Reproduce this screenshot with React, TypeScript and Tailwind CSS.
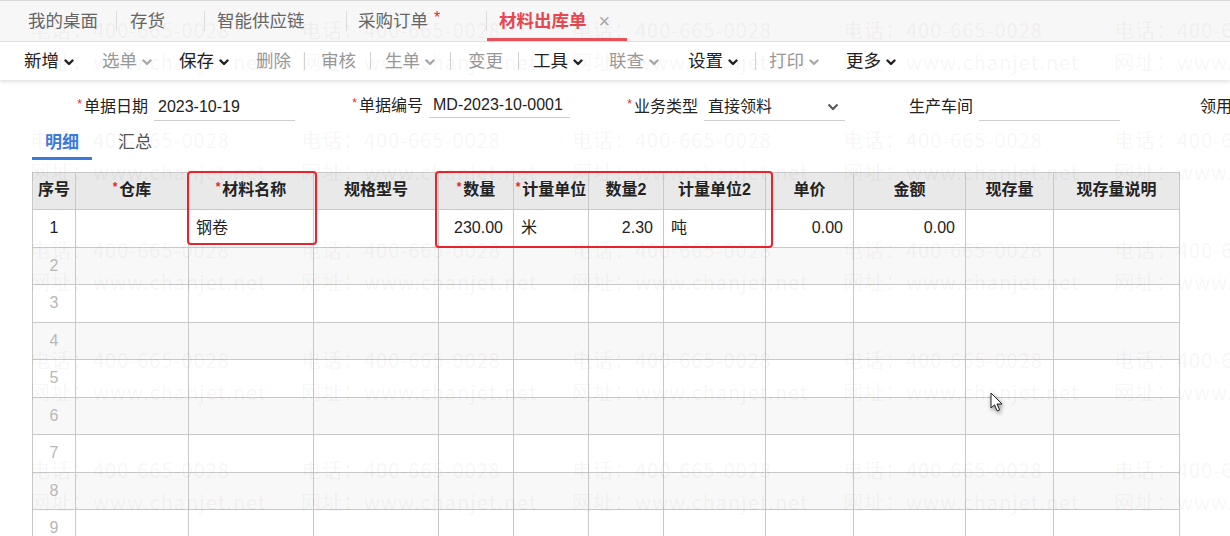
import React from "react";

const font = { fontFamily: '"Liberation Sans", "Noto Sans CJK SC", sans-serif' };

const tabs = [
  { label: "我的桌面", w: "w-[116px] pl-[28px]" },
  { label: "存货", w: "w-[87px] pl-[13px]" },
  { label: "智能供应链", w: "w-[141px] pl-[12px]" },
  { label: "采购订单", w: "w-[139px] pl-[11px]", dirty: true },
];

type ToolItem =
  | { sep: true; w: string }
  | { sep?: false; t: string; chev?: boolean; dark?: boolean; w: string };

const tools: ToolItem[] = [
  { t: "新增", chev: true, dark: true, w: "w-[78px]" },
  { t: "选单", chev: true, w: "w-[77px]" },
  { t: "保存", chev: true, dark: true, w: "w-[77px]" },
  { t: "删除", w: "w-[48px]" },
  { sep: true, w: "w-[17px]" },
  { t: "审核", w: "w-[49px]" },
  { sep: true, w: "w-[15px]" },
  { t: "生单", chev: true, w: "w-[65px]" },
  { sep: true, w: "w-[18px]" },
  { t: "变更", w: "w-[50px]" },
  { sep: true, w: "w-[15px]" },
  { t: "工具", chev: true, dark: true, w: "w-[76px]" },
  { t: "联查", chev: true, w: "w-[79px]" },
  { t: "设置", chev: true, dark: true, w: "w-[67px]" },
  { sep: true, w: "w-[14px]" },
  { t: "打印", chev: true, w: "w-[77px]" },
  { t: "更多", chev: true, dark: true, w: "w-[60px]" },
];

const columns = [
  { t: "序号" },
  { t: "仓库", req: true },
  { t: "材料名称", req: true },
  { t: "规格型号" },
  { t: "数量", req: true },
  { t: "计量单位", req: true },
  { t: "数量2" },
  { t: "计量单位2" },
  { t: "单价" },
  { t: "金额" },
  { t: "现存量" },
  { t: "现存量说明" },
];

const gridCols =
  "grid grid-cols-[43px_113px_125px_125px_75px_75px_75px_102px_88px_112px_88px_126px]";

// first row values: column index -> [text, align]
const firstRow: Record<number, [string, "l" | "r"]> = {
  2: ["钢卷", "l"],
  4: ["230.00", "r"],
  5: ["米", "l"],
  6: ["2.30", "r"],
  7: ["吨", "l"],
  8: ["0.00", "r"],
  9: ["0.00", "r"],
};

function Chevron({ dark }: { dark?: boolean }) {
  return (
    <svg width="10" height="7" viewBox="0 0 10 7" className="ml-[5px] mt-[2px]">
      <path
        d="M1.5 1.5 L5 5 L8.5 1.5"
        fill="none"
        stroke={dark ? "#222" : "#aaa"}
        strokeWidth="2.4"
        strokeLinecap="round"
        strokeLinejoin="round"
      />
    </svg>
  );
}

function Req() {
  return <span className="relative -top-[3px] mr-[2px] text-[12px] text-[#e02b2b]">*</span>;
}

function Field({
  label,
  value,
  req,
  select,
  lineClass = "h-[28px]",
}: {
  label: string;
  value?: string;
  req?: boolean;
  select?: boolean;
  lineClass?: string;
}) {
  return (
    <div className="flex w-[275px] shrink-0 items-center">
      <div className="flex w-[127px] items-center justify-end pr-[6px] text-[16px] text-[#222]">
        {req && <Req />}
        {label}
      </div>
      <div
        className={`flex w-[141px] items-center justify-between border-b border-[#cfcfcf] pl-[4px] pr-[6px] text-[16px] text-[#222] ${lineClass}`}
      >
        <span>{value}</span>
        {select && (
          <svg width="12" height="8" viewBox="0 0 12 8">
            <path d="M1.5 1.5 L6 6 L10.5 1.5" fill="none" stroke="#555" strokeWidth="2" />
          </svg>
        )}
      </div>
    </div>
  );
}

function Watermark() {
  const cells = Array.from({ length: 25 });
  return (
    <div className="pointer-events-none absolute left-[30px] top-[14px] z-10 grid grid-cols-[repeat(5,271px)] grid-rows-[repeat(5,110px)]">
      {cells.map((_, i) => (
        <div
          key={i}
          className="flex flex-col whitespace-nowrap text-[20px] leading-[32px] tracking-[1px] text-[rgba(0,0,0,0.055)]"
          style={{ fontFamily: '"Noto Sans CJK SC", sans-serif' }}
        >
          <span>电话：400-665-0028</span>
          <span>网址：www.chanjet.net</span>
        </div>
      ))}
    </div>
  );
}

export default function App() {
  const rows = Array.from({ length: 9 }, (_, i) => i + 1);
  return (
    <div className="relative h-[536px] w-[1230px] overflow-hidden bg-white" style={font}>
      {/* tab bar */}
      <div className="flex h-[42px] items-stretch border-t border-b border-t-[#d8d8d8] border-b-[#e2e2e2] bg-[#f7f7f7] text-[17.5px] text-[#666]">
        {tabs.map((tab, i) => (
          <div key={tab.label} className="flex items-center">
            {i > 0 && <span className="h-[20px] w-px bg-[#dcdcdc]" />}
            <div className={`flex items-center ${tab.w}`}>
              {tab.label}
              {tab.dirty && (
                <span className="relative -top-[3px] ml-[6px] text-[16px] text-[#e02b2b]">*</span>
              )}
            </div>
          </div>
        ))}
        <span className="h-[20px] w-px self-center bg-[#dcdcdc]" />
        <div className="flex w-[140px] items-center border-b-[3px] border-[#e8505a] pl-[12px] pt-[3px] font-bold text-[#e8464e]">
          材料出库单
          <span className="ml-[12px] text-[20px] font-normal text-[#aaa]">×</span>
        </div>
      </div>

      {/* toolbar */}
      <div className="relative z-[1] flex h-[38px] items-center bg-white pl-[24px] text-[17.5px] shadow-[0_2px_4px_rgba(0,0,0,0.12)]">
        {tools.map((it, i) =>
          it.sep ? (
            <div key={i} className={`flex h-full items-center ${it.w}`}>
              <span className="h-[18px] w-px bg-[#d4d4d4]" />
            </div>
          ) : (
            <div
              key={i}
              className={`flex items-center ${it.w} ${it.dark ? "text-[#222]" : "text-[#999]"}`}
            >
              {it.t}
              {it.chev && <Chevron dark={it.dark} />}
            </div>
          )
        )}
      </div>

      {/* header form */}
      <div className="flex h-[42px] items-start whitespace-nowrap pl-[27px] pt-[13px]">
        <Field label="单据日期" value="2023-10-19" req />
        <Field label="单据编号" value="MD-2023-10-0001" req lineClass="h-[25px] self-start" />
        <Field label="业务类型" value="直接领料" req select />
        <Field label="生产车间" />
        <div className="ml-[73px] flex h-[28px] shrink-0 items-center text-[16px] text-[#222]">
          领用部门
        </div>
      </div>

      {/* detail tabs */}
      <div className="mt-[6px] flex h-[32px] items-stretch pl-[32px] text-[17px]">
        <div className="flex w-[60px] items-center justify-center border-b-[3px] border-[#3a7bdc] font-bold text-[#3a7bdc]">
          明细
        </div>
        <div className="ml-[26px] flex items-center pb-[3px] text-[#555]">汇总</div>
      </div>

      {/* grid */}
      <div className="ml-[32px] mt-[12px] w-[1148px] border-l border-t border-[#c9c9c9]">
        <div className={`${gridCols} h-[37px] bg-[#e9e9e9]`}>
          {columns.map((c) => (
            <div
              key={c.t}
              className="flex items-center justify-center border-b border-r border-[#c9c9c9] pb-[2px] text-[16px] font-bold text-[#222]"
            >
              {c.req && <Req />}
              {c.t}
            </div>
          ))}
        </div>
        {rows.map((r) => (
          <div
            key={r}
            className={`${gridCols} h-[37.5px] ${r % 2 === 0 ? "bg-[#f8f8f8]" : "bg-white"}`}
          >
            {columns.map((c, ci) => {
              let content: React.ReactNode = null;
              let align = "justify-start pl-[8px]";
              if (ci === 0) {
                content = r;
                align = "justify-center";
              } else if (r === 1 && firstRow[ci]) {
                const v = firstRow[ci];
                content = v[0];
                align = v[1] === "r" ? "justify-end pr-[10px]" : "justify-start pl-[7px]";
              }
              return (
                <div
                  key={c.t}
                  className={`flex items-center border-b border-r border-[#c9c9c9] text-[16px] ${align} ${
                    ci === 0 && r > 1 ? "text-[15px] text-[#b8b8b8]" : "text-[#222]"
                  }`}
                >
                  {content}
                </div>
              );
            })}
          </div>
        ))}
      </div>

      <Watermark />

      {/* annotation boxes */}
      <div className="pointer-events-none absolute left-[187px] top-[171px] z-20 h-[74px] w-[130px] rounded-[4px] border-[2.5px] border-[#e8232b]" />
      <div className="pointer-events-none absolute left-[435px] top-[171px] z-20 h-[77px] w-[338px] rounded-[4px] border-[2.5px] border-[#e8232b]" />

      {/* mouse pointer */}
      <svg
        className="pointer-events-none absolute left-[990px] top-[392px] z-30 drop-shadow-[1px_2px_2px_rgba(0,0,0,0.45)]"
        width="14"
        height="21"
        viewBox="0 0 14 21"
      >
        <path
          d="M1 1 L1 16 L4.5 12.8 L7.2 19 L9.6 18 L7 12 L12 12 Z"
          fill="#fff"
          stroke="#222"
          strokeWidth="1"
          strokeLinejoin="round"
        />
      </svg>
    </div>
  );
}
